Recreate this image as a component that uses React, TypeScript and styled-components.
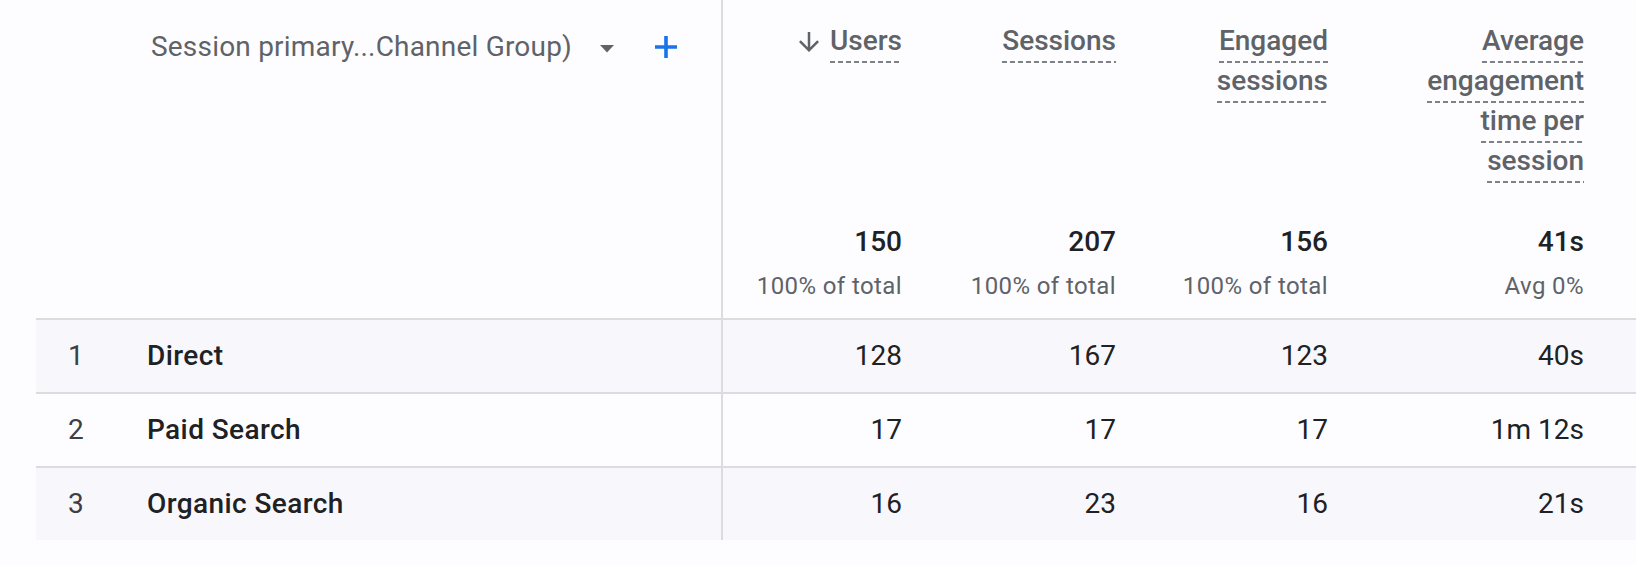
import React, { FC } from "react";
import styled, { createGlobalStyle } from "styled-components";

const GlobalStyle = createGlobalStyle`
  body {
    margin: 0;
    background: #fdfdff;
    font-family: Roboto, "Liberation Sans", sans-serif;
  }
`;

const COLUMNS = "687px 203px 214px 212px 256px 1fr";

interface IMetric {
  key: string;
  label: string[];
  total: string;
  share: string;
  sorted?: boolean;
}

interface IRow {
  name: string;
  values: string[];
}

const metrics: IMetric[] = [
  { key: "users", label: ["Users"], total: "150", share: "100% of total", sorted: true },
  { key: "sessions", label: ["Sessions"], total: "207", share: "100% of total" },
  { key: "engaged", label: ["Engaged", "sessions"], total: "156", share: "100% of total" },
  {
    key: "avg",
    label: ["Average", "engagement", "time per", "session"],
    total: "41s",
    share: "Avg 0%",
  },
];

const rows: IRow[] = [
  { name: "Direct", values: ["128", "167", "123", "40s"] },
  { name: "Paid Search", values: ["17", "17", "17", "1m 12s"] },
  { name: "Organic Search", values: ["16", "23", "16", "21s"] },
];

const Page = styled.div`
  padding-left: 36px;
  width: 1600px;
`;

const HeaderRow = styled.div`
  display: grid;
  grid-template-columns: ${COLUMNS};
  height: 318px;
  border-bottom: 2px solid #dadce0;
`;

const DimensionHeader = styled.div`
  display: flex;
  align-items: flex-start;
  padding: 27px 0 0 115px;
  border-right: 2px solid #dadce0;
`;

const DimensionTitle = styled.span`
  display: flex;
  align-items: center;
  height: 40px;
  font-size: 28px;
  letter-spacing: 0.2px;
  line-height: 40px;
  color: #5f6368;
  white-space: nowrap;
`;

const DropIcon = styled.svg`
  margin: 4px 0 0 28px;
  flex: none;
`;

const AddIcon = styled.svg`
  margin-left: 40px;
  flex: none;
`;

const MetricHeader = styled.div`
  display: flex;
  flex-direction: column;
  align-items: flex-end;
  justify-content: space-between;
  padding: 23px 24px 16px 0;
`;

const LabelStack = styled.div`
  display: flex;
  flex-direction: column;
  align-items: flex-end;
`;

const LabelLine = styled.div`
  display: flex;
  align-items: flex-start;
`;

const SortArrow = styled.svg`
  margin: 4px 6px 0 0;
  flex: none;
`;

const LabelText = styled.span`
  display: block;
  font-size: 28px;
  font-weight: 500;
  line-height: 36px;
  padding-bottom: 4px;
  color: #5f6368;
  white-space: nowrap;
  background-image: repeating-linear-gradient(
    to right,
    #7d8186 0 5px,
    transparent 5px 8px
  );
  background-size: 100% 2px;
  background-position: left bottom;
  background-repeat: no-repeat;
`;

const TotalBlock = styled.div`
  display: flex;
  flex-direction: column;
  align-items: flex-end;
`;

const TotalValue = styled.span`
  font-size: 28px;
  font-weight: 500;
  line-height: 36px;
  margin-bottom: 10px;
  color: #202124;
`;

const TotalShare = styled.span`
  font-size: 24px;
  letter-spacing: 0.4px;
  line-height: 32px;
  color: #5f6368;
  white-space: nowrap;
`;

const BodyRow = styled.div<{ $shaded: boolean; $last: boolean }>`
  display: grid;
  grid-template-columns: ${COLUMNS};
  height: 72px;
  background: ${(p) => (p.$shaded ? "#f8f8fc" : "#fdfdff")};
  border-bottom: ${(p) => (p.$last ? "none" : "2px solid #dadce0")};
`;

const DimensionCell = styled.div`
  display: grid;
  grid-template-columns: 79px 1fr;
  align-items: center;
  padding-left: 32px;
  border-right: 2px solid #dadce0;
  font-size: 28px;
  line-height: 36px;
`;

const RowIndex = styled.span`
  color: #3c4043;
`;

const RowName = styled.span`
  font-weight: 500;
  letter-spacing: 0.4px;
  color: #202124;
`;

const ValueCell = styled.div`
  display: flex;
  align-items: center;
  justify-content: flex-end;
  padding-right: 24px;
  font-size: 28px;
  line-height: 36px;
  color: #202124;
`;

const MetricHeaderCell: FC<{ metric: IMetric }> = ({ metric }) => (
  <MetricHeader>
    <LabelStack>
      {metric.label.map((line, i) => (
        <LabelLine key={line}>
          {metric.sorted && i === 0 && (
            <SortArrow width="30" height="30" viewBox="0 0 24 24">
              <path
                fill="#5f6368"
                d="M20 12l-1.41-1.41L13 16.17V4h-2v12.17l-5.58-5.59L4 12l8 8 8-8z"
              />
            </SortArrow>
          )}
          <LabelText>{line}</LabelText>
        </LabelLine>
      ))}
    </LabelStack>
    <TotalBlock>
      <TotalValue>{metric.total}</TotalValue>
      <TotalShare>{metric.share}</TotalShare>
    </TotalBlock>
  </MetricHeader>
);

export default function App() {
  return (
    <Page>
      <GlobalStyle />
      <HeaderRow>
        <DimensionHeader>
          <DimensionTitle>
            Session primary...Channel Group)
            <DropIcon width="14" height="8" viewBox="0 0 14 8">
              <path d="M0 0h14L7 7.5z" fill="#5f6368" />
            </DropIcon>
            <AddIcon width="24" height="24" viewBox="0 0 24 24">
              <path
                d="M12 1v22M1 12h22"
                stroke="#1a73e8"
                strokeWidth="3.6"
                fill="none"
              />
            </AddIcon>
          </DimensionTitle>
        </DimensionHeader>
        {metrics.map((m) => (
          <MetricHeaderCell key={m.key} metric={m} />
        ))}
        <div />
      </HeaderRow>
      {rows.map((row, i) => (
        <BodyRow key={row.name} $shaded={i % 2 === 0} $last={i === rows.length - 1}>
          <DimensionCell>
            <RowIndex>{i + 1}</RowIndex>
            <RowName>{row.name}</RowName>
          </DimensionCell>
          {row.values.map((v, j) => (
            <ValueCell key={metrics[j].key}>{v}</ValueCell>
          ))}
          <div />
        </BodyRow>
      ))}
    </Page>
  );
}
